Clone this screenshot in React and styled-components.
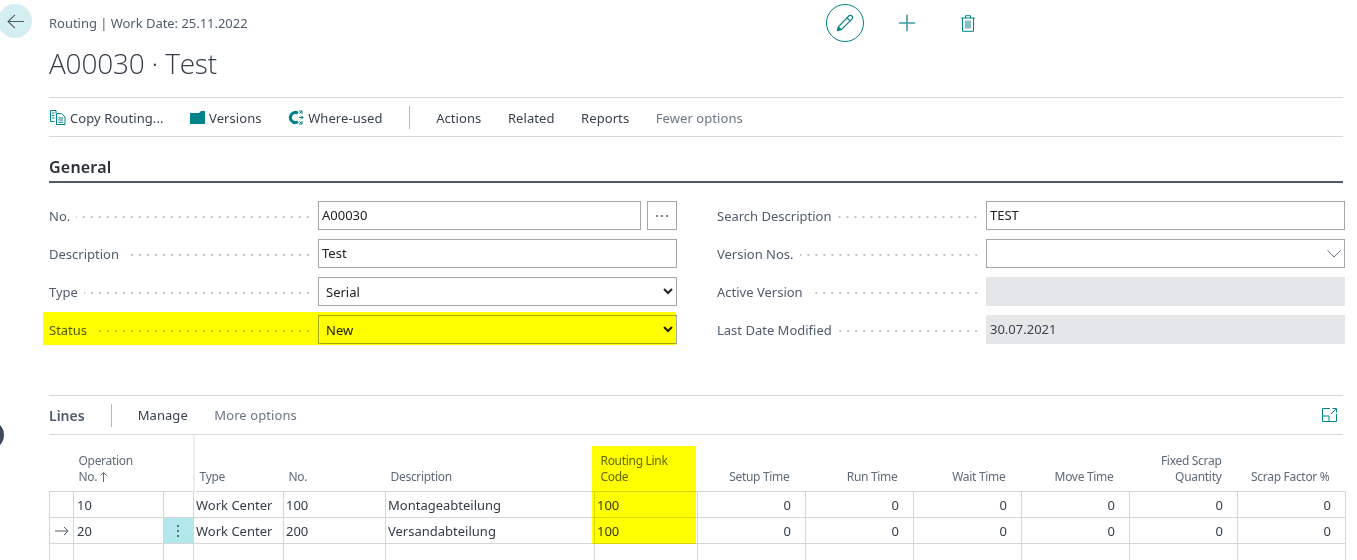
import React from 'react';
import styled, { createGlobalStyle } from 'styled-components';
import { Plus } from 'lucide-react';

const Global = createGlobalStyle`
  html, body { margin: 0; padding: 0; background: #fff; }
  body { font-family: "Noto Sans", "Open Sans", sans-serif; font-size: 13px; color: #212121; width: 1357px; height: 560px; overflow: hidden; }
  #root { height: 560px; }
`;

const teal = '#00838a';
const label = '#505c6d';

const Page = styled.div`
  position: relative;
  display: flex;
  height: 560px;
  overflow: hidden;
`;
const Gutter = styled.div`
  width: 49px;
  flex: none;
`;
const BackButton = styled.button`
  display: flex;
  align-items: center;
  justify-content: center;
  width: 34px;
  height: 34px;
  margin: 4px 0 0 -2px;
  padding: 0;
  border: 0;
  border-radius: 50%;
  background: #d5eef1;
  color: #505c6d;
`;
const SideDot = styled.div`
  position: absolute;
  left: -28px;
  top: 420px;
  width: 32px;
  height: 30px;
  border-radius: 50%;
  background: #3e4a5c;
`;
const Main = styled.div`
  width: 1296px;
  flex: none;
`;
const Header = styled.header`
  display: flex;
  height: 97px;
  box-sizing: border-box;
`;
const TitleBlock = styled.div`
  width: 777px;
  flex: none;
`;
const Crumb = styled.div`
  margin-top: 14px;
  font-size: 13px;
  line-height: 18px;
  letter-spacing: -0.03px;
  color: ${label};
`;
const Title = styled.h1`
  margin: 12px 0 0;
  font-family: "Open Sans", "Noto Sans", sans-serif;
  font-size: 28px;
  line-height: 38px;
  font-weight: 300;
  letter-spacing: -0.2px;
  color: #333c48;
`;
const HeadActions = styled.div`
  display: flex;
  align-items: center;
  height: 38px;
  margin-top: 4px;
`;
const EditCircle = styled.div`
  width: 36px;
  height: 36px;
  border: 1px solid ${teal};
  border-radius: 50%;
  display: flex;
  align-items: center;
  justify-content: center;
  color: ${teal};
`;
const PlusWrap = styled.div`
  margin-left: 30px;
  display: flex;
  color: #3f9da2;
`;
const TrashWrap = styled.div`
  margin-left: 41px;
  display: flex;
  color: ${teal};
`;
const Toolbar = styled.nav`
  display: flex;
  align-items: center;
  padding-top: 1px;
  box-sizing: border-box;
  height: 40px;
  border-top: 1px solid #d8d8d8;
  border-bottom: 1px solid #d8d8d8;
  width: 1294px;
`;
const ToolItem = styled.span`
  display: flex;
  align-items: center;
  gap: 4px;
  margin-left: ${p => p.$ml ?? 26.5}px;
  letter-spacing: 0.08px;
  color: ${p => (p.$muted ? '#6b7685' : '#39424e')};
  white-space: nowrap;
`;
const ToolDivider = styled.span`
  width: 1px;
  height: 23px;
  background: #b5b9bf;
  margin-left: 26px;
`;
const SectionTitle = styled.h2`
  margin: 0;
  height: 46px;
  box-sizing: border-box;
  padding-top: 16px;
  width: 1294px;
  border-bottom: 2px solid #505a6b;
  font-size: 16px;
  line-height: 22px;
  font-weight: 600;
  letter-spacing: 0.2px;
  color: #2b2f36;
  display: flex;
  align-items: center;
`;
const Form = styled.div`
  display: grid;
  grid-template-columns: 628px 628px;
  column-gap: 40px;
  margin-top: 18px;
`;
const Column = styled.div`
  display: flex;
  flex-direction: column;
  gap: 9px;
`;
const Row = styled.div`
  position: relative;
  display: grid;
  grid-template-columns: 269px 1fr;
  height: 29px;
`;
const Highlight = styled.div`
  position: absolute;
  left: -6px;
  right: 1px;
  top: -3px;
  bottom: -1px;
  background: #ffff00;
  mix-blend-mode: multiply;
  pointer-events: none;
  z-index: 2;
`;
const Label = styled.div`
  display: flex;
  align-items: center;
  color: ${label};
  white-space: nowrap;
  padding-right: 9px;
`;
const Dots = styled.span`
  flex: 1;
  height: 2px;
  margin: 3px 0 0 6px;
  background-image: radial-gradient(circle at 7px 1px, #c2c6cc 0.8px, transparent 1px);
  background-size: 8px 2px;
  background-position: right;
`;
const FieldLine = styled.div`
  display: flex;
  gap: 6px;
`;
const Input = styled.div`
  flex: 1;
  height: 29px;
  box-sizing: border-box;
  border: 1px solid #a6a6a6;
  padding: 0 3px;
  line-height: 27px;
  color: #212121;
  display: flex;
  align-items: center;
  justify-content: space-between;
`;
const ReadOnly = styled.div`
  height: 29px;
  box-sizing: border-box;
  background: #e5e6e8;
  padding: 0 4px;
  line-height: 29px;
  color: #39424e;
`;
const AssistButton = styled.div`
  width: 30px;
  height: 29px;
  box-sizing: border-box;
  border: 1px solid #a6a6a6;
  display: flex;
  align-items: center;
  justify-content: center;
  gap: 3px;
`;
const Dot = styled.i`
  width: 2px;
  height: 2px;
  border-radius: 50%;
  background: #505c6d;
`;
const NativeSelect = styled.select`
  width: 100%;
  height: 29px;
  box-sizing: border-box;
  border: 1px solid #a6a6a6;
  border-radius: 0;
  background: #fff;
  padding: 0 3px;
  font: inherit;
  color: #212121;
`;
const LinesBar = styled.div`
  display: flex;
  align-items: center;
  height: 40px;
  box-sizing: border-box;
  width: 1294px;
  margin-top: 51px;
  border-top: 1px solid #d8d8d8;
  border-bottom: 1px solid #d8d8d8;
`;
const LinesTitle = styled.span`
  font-size: 14px;
  font-weight: 600;
  color: ${label};
`;
const LinesDivider = styled.span`
  width: 1px;
  height: 23px;
  background: #b5b9bf;
  margin-left: 26px;
`;
const BarSpacer = styled.span`
  flex: 1;
`;
const ExpandWrap = styled.span`
  display: flex;
  color: ${teal};
  margin-right: 6px;
`;
const TableWrap = styled.div`
  position: relative;
`;
const TableHighlight = styled.div`
  position: absolute;
  left: 543px;
  top: 11px;
  width: 104px;
  height: 98px;
  background: #ffff00;
  mix-blend-mode: multiply;
  pointer-events: none;
`;
const Grid = styled.table`
  table-layout: fixed;
  width: 1296px;
  border-collapse: collapse;
`;
const Th = styled.th`
  height: 56px;
  box-sizing: border-box;
  padding: 0 ${p => (p.$right ? 16 : 5)}px 6px ${p => (p.$pl ?? 5)}px;
  vertical-align: bottom;
  text-align: ${p => (p.$right ? 'right' : 'left')};
  font-size: 12px;
  line-height: 16px;
  letter-spacing: -0.3px;
  font-weight: 400;
  color: #5f6a79;
  border-bottom: 1px solid #d5d5d5;
  border-right: ${p => (p.$frozen ? '2px solid #eeeeee' : '0')};
`;
const Td = styled.td`
  height: 26px;
  box-sizing: border-box;
  padding: 2px ${p => (p.$right ? 14 : 2)}px 0 ${p => p.$pl ?? 2}px;
  text-align: ${p => (p.$right ? 'right' : 'left')};
  background: ${p => (p.$active ? '#b2e8ec' : 'transparent')};
  border: 1px solid #d5d5d5;
  color: #333c48;
  white-space: nowrap;
`;
const RowMarker = styled.span`
  display: flex;
  justify-content: center;
  color: #505c6d;
`;
const Kebab = styled.span`
  display: flex;
  flex-direction: column;
  align-items: center;
  gap: 3px;
`;
const KebabDot = styled.i`
  width: 2px;
  height: 2px;
  border-radius: 50%;
  background: #3e4a5c;
`;
const SortMark = styled.svg`
  margin-left: 3px;
  vertical-align: -1px;
`;

const PencilIcon = () => (
  <svg width="18" height="18" viewBox="0 0 18 18" fill="none" stroke="currentColor" strokeWidth="1.100">
    <path d="M12.800 2a2.100 2.100 0 0 1 3.200 3.200L5.500 15.500 1.500 16.500 2.500 12.500Z" />
    <path d="M11 3.800l3.200 3.200" />
    <path d="M1.500 16.500l1-3.500 2.500 2.500z" fill="currentColor" />
  </svg>
);
const CopyIcon = () => (
  <svg width="16" height="15" viewBox="0 0 16 15" fill="none" stroke={teal} strokeWidth="1">
    <path d="M4.500 11.500H.5V.5h5.500v3" />
    <path d="M6.500 3.500h5l3.500 3.500v7.500H6.500z" />
    <path d="M2 3h2.500M2 5.500h2.500M2 8h2.500M8.500 8h4.500M8.500 10h4.500M8.500 12.300h4.500" />
  </svg>
);
const FolderIcon = () => (
  <svg width="15" height="13" viewBox="0 0 15 13" fill={teal}>
    <path d="M0 2h9l2-2h4v13H0z" />
  </svg>
);
const WhereIcon = () => (
  <svg width="16" height="15" viewBox="0 0 16 15" fill="none" stroke={teal}>
    <path d="M10 3.200A5 5 0 1 0 10 11.800" strokeWidth="3" />
    <path d="M11 1h3v3M14 1l-2.500 2.500M11 14h3v-3M14 14l-2.500-2.500M11 7.500h4M13 5.500l2 2-2 2" strokeWidth="1" />
  </svg>
);
const TrashIcon = () => (
  <svg width="14" height="17" viewBox="0 0 14 17" fill="none" stroke="currentColor" strokeWidth="1">
    <path d="M0 3h14M4.500 3V.7h5V3M1.500 3v13.300h11V3M5 5.500v8M7 5.500v8M9 5.500v8" />
  </svg>
);
const ExpandIcon = () => (
  <svg width="15" height="14" viewBox="0 0 15 14" fill="none" stroke="currentColor" strokeWidth="1">
    <path d="M8 .5H.5v13h14V6M.5 8H7v5.500M9 6l5-5M10.500.5h4v4" />
  </svg>
);
const ArrowRight = () => (
  <svg width="14" height="10" viewBox="0 0 14 10" fill="none" stroke="currentColor" strokeWidth="1">
    <path d="M0 5h13M9 1l4 4-4 4" />
  </svg>
);
const ArrowLeft = () => (
  <svg width="17" height="15" viewBox="0 0 17 15" fill="none" stroke="currentColor" strokeWidth="1.100">
    <path d="M17 7.500H1M8 .8 1 7.500 8 14.200" />
  </svg>
);
const Chevron = () => (
  <svg width="14" height="8" viewBox="0 0 14 8" fill="none" stroke="#6b7685" strokeWidth="1">
    <path d="M.5.500 7 7 13.500.500" />
  </svg>
);
const SortUp = () => (
  <SortMark width="7" height="10" viewBox="0 0 7 10" fill="none" stroke="#5f6a79" strokeWidth="1">
    <path d="M3.500 10V1M.5 3.500l3-3 3 3" />
  </SortMark>
);

const Field = ({ name, children, marked }) => (
  <Row>
    {marked && <Highlight />}
    <Label>
      {name}
      <Dots />
    </Label>
    {children}
  </Row>
);

const widths = [24, 90, 30, 90, 102, 209, 103, 108, 108, 108, 108, 108, 108];
const rows = [
  { op: '10', no: '100', desc: 'Montageabteilung', link: '100' },
  { op: '20', no: '200', desc: 'Versandabteilung', link: '100', active: true },
  { empty: true },
];
const times = ['Setup Time', 'Run Time', 'Wait Time', 'Move Time'];

export default function App() {
  return (
    <Page>
      <Global />
      <SideDot />
      <Gutter>
        <BackButton aria-label="Back">
          <ArrowLeft />
        </BackButton>
      </Gutter>
      <Main>
        <Header>
          <TitleBlock>
            <Crumb>Routing | Work Date: 25.11.2022</Crumb>
            <Title>A00030 · Test</Title>
          </TitleBlock>
          <HeadActions>
            <EditCircle>
              <PencilIcon />
            </EditCircle>
            <PlusWrap>
              <Plus size={26} strokeWidth={1.5} />
            </PlusWrap>
            <TrashWrap>
              <TrashIcon />
            </TrashWrap>
          </HeadActions>
        </Header>
        <Toolbar>
          <ToolItem $ml={1}><CopyIcon />Copy Routing...</ToolItem>
          <ToolItem><FolderIcon />Versions</ToolItem>
          <ToolItem><WhereIcon />Where-used</ToolItem>
          <ToolDivider />
          <ToolItem>Actions</ToolItem>
          <ToolItem>Related</ToolItem>
          <ToolItem>Reports</ToolItem>
          <ToolItem $muted>Fewer options</ToolItem>
        </Toolbar>
        <SectionTitle>General</SectionTitle>
        <Form>
          <Column>
            <Field name="No.">
              <FieldLine>
                <Input>A00030</Input>
                <AssistButton><Dot /><Dot /><Dot /></AssistButton>
              </FieldLine>
            </Field>
            <Field name="Description"><Input>Test</Input></Field>
            <Field name="Type">
              <NativeSelect defaultValue="Serial"><option>Serial</option></NativeSelect>
            </Field>
            <Field name="Status" marked>
              <NativeSelect defaultValue="New"><option>New</option></NativeSelect>
            </Field>
          </Column>
          <Column>
            <Field name="Search Description"><Input>TEST</Input></Field>
            <Field name="Version Nos."><Input><span /><Chevron /></Input></Field>
            <Field name="Active Version"><ReadOnly /></Field>
            <Field name="Last Date Modified"><ReadOnly>30.07.2021</ReadOnly></Field>
          </Column>
        </Form>
        <LinesBar>
          <LinesTitle>Lines</LinesTitle>
          <LinesDivider />
          <ToolItem $ml={26}>Manage</ToolItem>
          <ToolItem $muted>More options</ToolItem>
          <BarSpacer />
          <ExpandWrap><ExpandIcon /></ExpandWrap>
        </LinesBar>
        <TableWrap>
          <Grid>
            <colgroup>
              {widths.map((w, i) => <col key={i} style={{ width: w }} />)}
            </colgroup>
            <thead>
              <tr>
                <Th />
                <Th>Operation<br />No.<SortUp /></Th>
                <Th $frozen />
                <Th>Type</Th>
                <Th>No.</Th>
                <Th>Description</Th>
                <Th $pl={6}>Routing Link<br />Code</Th>
                {times.map(t => <Th key={t} $right>{t}</Th>)}
                <Th $right>Fixed Scrap<br />Quantity</Th>
                <Th $right>Scrap Factor %</Th>
              </tr>
            </thead>
            <tbody>
              {rows.map((r, i) => (
                <tr key={i}>
                  <Td>{r.active && <RowMarker><ArrowRight /></RowMarker>}</Td>
                  <Td $pl={3}>{r.op}</Td>
                  <Td $pl={0} $active={r.active}>
                    {r.active && <Kebab><KebabDot /><KebabDot /><KebabDot /></Kebab>}
                  </Td>
                  <Td>{r.empty ? '' : 'Work Center'}</Td>
                  <Td>{r.no}</Td>
                  <Td>{r.desc}</Td>
                  <Td>{r.link}</Td>
                  {[0, 1, 2, 3, 4, 5].map(c => <Td key={c} $right>{r.empty ? '' : '0'}</Td>)}
                </tr>
              ))}
            </tbody>
          </Grid>
          <TableHighlight />
        </TableWrap>
      </Main>
    </Page>
  );
}
